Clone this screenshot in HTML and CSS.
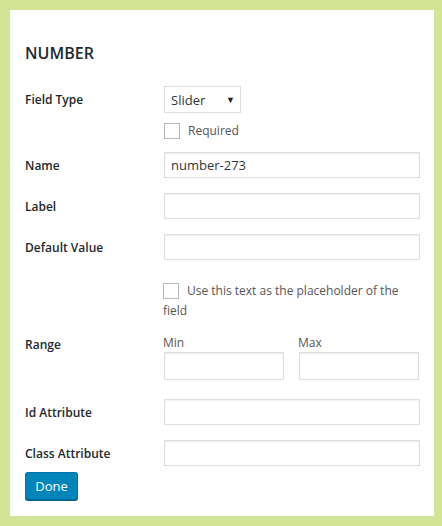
FILE: index.html
```html
<!DOCTYPE html>
<html>
<head>
<meta charset="utf-8">
<link rel="stylesheet" href="styles.css">
</head>
<body>
<div class="panel">
  <h2 class="title">NUMBER</h2>
  <div class="row row-type">
    <div class="label">Field Type</div>
    <div class="field">
      <div class="select"><span>Slider</span><span class="arrow">▼</span></div>
      <label class="check"><span class="box"></span><span>Required</span></label>
    </div>
  </div>
  <div class="row">
    <div class="label">Name</div>
    <div class="field"><div class="input">number-273</div></div>
  </div>
  <div class="row">
    <div class="label">Label</div>
    <div class="field"><div class="input"></div></div>
  </div>
  <div class="row">
    <div class="label">Default Value</div>
    <div class="field"><div class="input"></div></div>
  </div>
  <div class="row row-ph">
    <div class="label"></div>
    <div class="field"><p class="ph"><span class="box"></span>Use this text as the placeholder of the field</p></div>
  </div>
  <div class="row row-range">
    <div class="label">Range</div>
    <div class="field range">
      <div class="rcol"><div class="sub">Min</div><div class="input small"></div></div>
      <div class="rcol"><div class="sub">Max</div><div class="input small"></div></div>
    </div>
  </div>
  <div class="row">
    <div class="label">Id Attribute</div>
    <div class="field"><div class="input"></div></div>
  </div>
  <div class="row">
    <div class="label">Class Attribute</div>
    <div class="field"><div class="input"></div></div>
  </div>
  <button class="done">Done</button>
</div>
</body>
</html>
```
FILE: styles.css
```css
html, body { margin: 0; padding: 0; }
body {
  background: #d4e497;
  font-family: "Open Sans", "Noto Sans", sans-serif;
  font-size: 12px;
  color: #32373c;
  width: 442px;
  height: 526px;
  overflow: hidden;
}
.panel {
  background: #fff;
  margin: 10px 8px 0 10px;
  height: 506px;
  box-sizing: border-box;
  padding: 32px 14px 0 15px;
}
.title {
  margin: 0 0 22px 0;
  font-size: 16px;
  font-weight: 600;
  color: #23282d;
  line-height: 22px;
}
.row {
  display: grid;
  grid-template-columns: 139px 256px;
  align-items: center;
  margin-bottom: 15px;
}
.label {
  font-weight: 600;
  color: #23282d;
  padding-top: 1px;
}
.row-type { align-items: start; margin-bottom: 13px; }
.row-type .label { padding-top: 5px; }
.select {
  width: 77px;
  height: 27px;
  box-sizing: border-box;
  border: 1px solid #ddd;
  display: flex;
  align-items: center;
  justify-content: space-between;
  padding: 0 5px 0 6px;
  color: #32373c;
  font-size: 13px;
}
.arrow { font-size: 9px; color: #222; }
.check {
  display: flex;
  align-items: center;
  margin-top: 9px;
  color: #555;
}
.box {
  display: inline-block;
  width: 16px;
  height: 16px;
  box-sizing: border-box;
  border: 1px solid #b4b9be;
  background: #fff;
  margin-right: 8px;
  flex: none;
}
.input {
  height: 26px;
  box-sizing: border-box;
  border: 1px solid #ddd;
  box-shadow: inset 0 1px 2px rgba(0,0,0,0.07);
  padding: 0 6px;
  display: flex;
  align-items: center;
  color: #32373c;
  font-size: 13px;
}
.row-ph { margin-top: 21px; margin-bottom: 14px; }
.ph {
  margin: 0;
  line-height: 20px;
  color: #555;
  margin-left: -1px;
}
.ph .box { vertical-align: -4px; margin-right: 8px; }
.row-range { align-items: start; margin-bottom: 19px; }
.range { display: flex; gap: 15px; }
.rcol { width: 120px; }
.sub { color: #555; line-height: 16px; margin-bottom: 1px; margin-left: -1px; }
.input.small { height: 28px; }
.done {
  display: block;
  font-family: inherit;
  font-size: 13px;
  color: #fff;
  background: #0085ba;
  border: 1px solid #0073aa;
  border-bottom-color: #006799;
  border-radius: 3px;
  box-shadow: 0 1px 0 #006799;
  width: 53px;
  height: 28px;
  padding: 0;
  margin-top: -9px;
}
```
